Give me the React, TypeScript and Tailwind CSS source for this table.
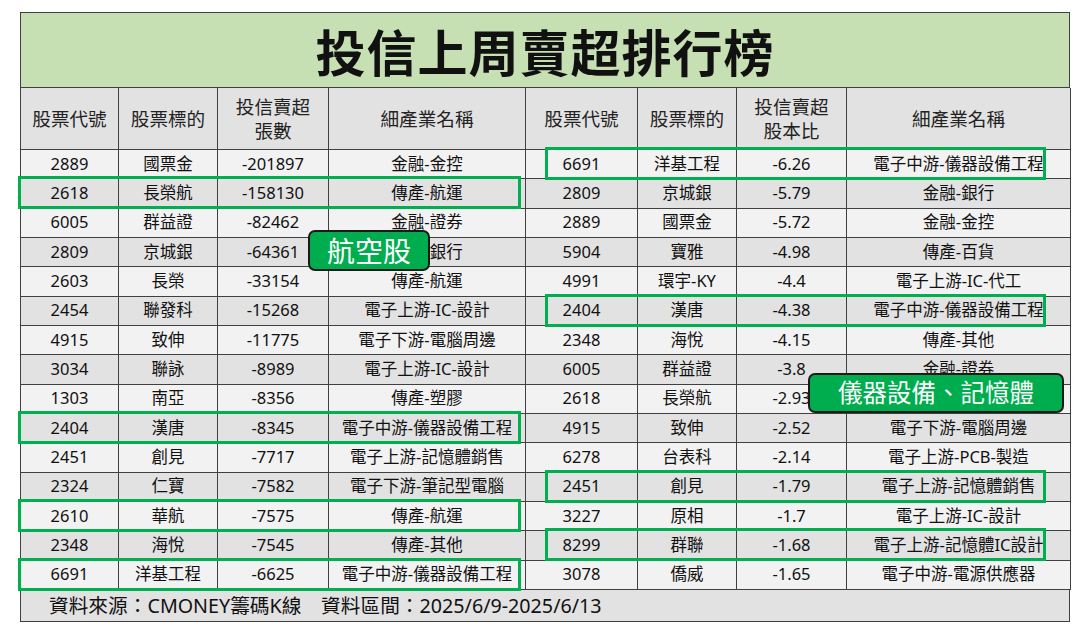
const leftRows = [
  ["2889", "國票金", "-201897", "金融-金控"],
  ["2618", "長榮航", "-158130", "傳產-航運"],
  ["6005", "群益證", "-82462", "金融-證券"],
  ["2809", "京城銀", "-64361", "金融-銀行"],
  ["2603", "長榮", "-33154", "傳產-航運"],
  ["2454", "聯發科", "-15268", "電子上游-IC-設計"],
  ["4915", "致伸", "-11775", "電子下游-電腦周邊"],
  ["3034", "聯詠", "-8989", "電子上游-IC-設計"],
  ["1303", "南亞", "-8356", "傳產-塑膠"],
  ["2404", "漢唐", "-8345", "電子中游-儀器設備工程"],
  ["2451", "創見", "-7717", "電子上游-記憶體銷售"],
  ["2324", "仁寶", "-7582", "電子下游-筆記型電腦"],
  ["2610", "華航", "-7575", "傳產-航運"],
  ["2348", "海悅", "-7545", "傳產-其他"],
  ["6691", "洋基工程", "-6625", "電子中游-儀器設備工程"],
];

const rightRows = [
  ["6691", "洋基工程", "-6.26", "電子中游-儀器設備工程"],
  ["2809", "京城銀", "-5.79", "金融-銀行"],
  ["2889", "國票金", "-5.72", "金融-金控"],
  ["5904", "寶雅", "-4.98", "傳產-百貨"],
  ["4991", "環宇-KY", "-4.4", "電子上游-IC-代工"],
  ["2404", "漢唐", "-4.38", "電子中游-儀器設備工程"],
  ["2348", "海悅", "-4.15", "傳產-其他"],
  ["6005", "群益證", "-3.8", "金融-證券"],
  ["2618", "長榮航", "-2.93", "傳產-航運"],
  ["4915", "致伸", "-2.52", "電子下游-電腦周邊"],
  ["6278", "台表科", "-2.14", "電子上游-PCB-製造"],
  ["2451", "創見", "-1.79", "電子上游-記憶體銷售"],
  ["3227", "原相", "-1.7", "電子上游-IC-設計"],
  ["8299", "群聯", "-1.68", "電子上游-記憶體IC設計"],
  ["3078", "僑威", "-1.65", "電子中游-電源供應器"],
];

// rows that get a green outline (0-based)
const leftMarks = [1, 9, 12, 14];
const rightMarks = [0, 5, 11, 13];
const ROW_H = 29.33;

const cell = "flex items-center justify-center border-r border-b border-[#404040] whitespace-nowrap overflow-hidden";

export default function App() {
  return (
    <div
      className="relative w-[1085px] h-[629px] bg-white pt-[12px] pl-[20px] text-[#111]"
      style={{ fontFamily: '"Noto Sans", "Noto Sans CJK TC", sans-serif' }}
    >
      <div className="w-[1050px] border-l border-t border-[#404040]">
        <div className="h-[75px] flex items-center justify-center bg-[#c6e0b4] border-r border-b border-[#404040]">
          <span className="text-[50px] font-bold tracking-[1px] leading-none" style={{ fontFamily: '"Noto Sans CJK TC", sans-serif' }}>
            投信上周賣超排行榜
          </span>
        </div>

        <div className="grid grid-cols-[98px_99px_111px_197px_112px_99px_110px_224px]">
          {[
            ["股票代號"], ["股票標的"], ["投信賣超", "張數"], ["細產業名稱"],
            ["股票代號"], ["股票標的"], ["投信賣超", "股本比"], ["細產業名稱"],
          ].map((h, i) => (
            <div key={i} className={`${cell} h-[62px] flex-col bg-[#e2e2e2] text-[18.6px] leading-[24px] text-[#222]`}>
              {h.map((t) => (
                <span key={t}>{t}</span>
              ))}
            </div>
          ))}

          {leftRows.map((l, r) => {
            const bg = r % 2 === 0 ? "bg-[#f2f2f2]" : "bg-[#e2e2e2]";
            return [...l, ...rightRows[r]].map((v, c) => (
              <div key={`${r}-${c}`} className={`${cell} ${bg} h-[29.33px] text-[16.5px]`}>
                {v}
              </div>
            ));
          })}
        </div>

        <div className="h-[32px] flex items-center pl-[28px] bg-[#e2e2e2] border-r border-b border-[#404040] text-[19.7px]">
          資料來源：CMONEY籌碼K線　資料區間：2025/6/9-2025/6/13
        </div>
      </div>

      {leftMarks.map((r) => (
        <div
          key={`l${r}`}
          className="absolute left-[18px] w-[503px] h-[33px] border-[3px] border-[#00b050]"
          style={{ top: 147 + r * ROW_H }}
        />
      ))}
      {rightMarks.map((r) => (
        <div
          key={`r${r}`}
          className="absolute left-[545px] w-[501px] h-[33px] border-[3px] border-[#00b050]"
          style={{ top: 147 + r * ROW_H }}
        />
      ))}

      <div className="absolute left-[308px] top-[230px] w-[122px] h-[41px] flex items-center justify-center rounded-[7px] border-2 border-[#1a1a1a] bg-[#00ad4e] text-white text-[28px] leading-none">
        航空股
      </div>
      <div className="absolute left-[808px] top-[373px] w-[256px] h-[40px] flex items-center justify-center rounded-[7px] border-2 border-[#1a1a1a] bg-[#00ad4e] text-white text-[24.5px] leading-none">
        儀器設備、記憶體
      </div>
    </div>
  );
}
